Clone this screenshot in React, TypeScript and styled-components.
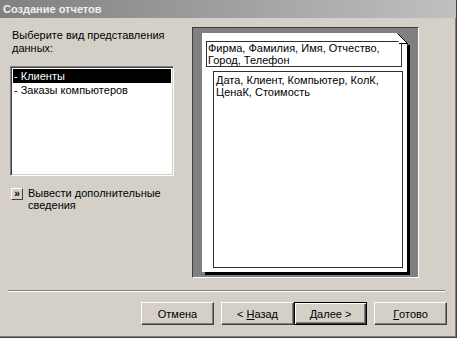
import React from 'react';
import styled, { createGlobalStyle } from 'styled-components';

const GlobalStyle = createGlobalStyle`
  html, body {
    margin: 0;
    padding: 0;
    background: #ffffff;
  }
  body {
    font-family: 'Liberation Sans', Arial, sans-serif;
    font-size: 11px;
    color: #000;
  }
  * {
    box-sizing: border-box;
  }
`;

const sourceItems = ['- Клиенты', '- Заказы компьютеров'];

const App: React.FC = () => {
  return (
    <>
      <GlobalStyle />
      <Window>
        <TitleBar>Создание отчетов</TitleBar>
        <Main>
          <LeftColumn>
            <Prompt>
              Выберите вид представления
              <br />
              данных:
            </Prompt>
            <ListBox>
              {sourceItems.map((item, i) => (
                <ListItem key={item} selected={i === 0}>
                  {item}
                </ListItem>
              ))}
            </ListBox>
            <MoreRow>
              <MoreButton>»</MoreButton>
              <MoreText>
                Вывести дополнительные
                <br />
                сведения
              </MoreText>
            </MoreRow>
          </LeftColumn>

          <PreviewFrame>
            <Paper>
              <FoldedCorner width="14" height="12" viewBox="0 0 14 12">
                <polygon points="0,0 14,0 14,12 11,12" fill="#808080" />
                <polygon points="0.5,0.5 10.5,10.5 2,10.5" fill="#ffffff" />
                <polyline points="0.5,0.5 10.5,10.5 2,10.5" fill="none" stroke="#000" strokeWidth="1" />
              </FoldedCorner>
              <HeaderBox>
                Фирма, Фамилия, Имя, Отчество,
                <br />
                Город, Телефон
              </HeaderBox>
              <DetailBox>
                Дата, Клиент, Компьютер, КолК,
                <br />
                ЦенаК, Стоимость
              </DetailBox>
            </Paper>
          </PreviewFrame>
        </Main>

        <Separator />

        <ButtonRow>
          <Button>Отмена</Button>
          <ButtonPair>
            <Button>
              {'< '}
              <u>Н</u>азад
            </Button>
            <Button isDefault>
              <u>Д</u>алее{' >'}
            </Button>
          </ButtonPair>
          <Button>
            <u>Г</u>отово
          </Button>
        </ButtonRow>
      </Window>
    </>
  );
};

const Window = styled.div`
  width: 457px;
  height: 338px;
  background: #d4d0c8;
  border-right: 1px solid #404040;
  border-bottom: 1px solid #404040;
  box-shadow: inset -1px -1px 0 #808080;
  display: flex;
  flex-direction: column;
`;

const TitleBar = styled.div`
  height: 18px;
  flex: none;
  padding: 0 3px;
  background: linear-gradient(90deg, #808080 0%, #a6a6a6 60%, #c0c0c0 100%);
  color: #f2f0ea;
  font-weight: bold;
  font-size: 11px;
  line-height: 18px;
`;

const Main = styled.div`
  height: 272px;
  flex: none;
  display: flex;
  align-items: flex-start;
  padding: 9px 0 0 10px;
`;

const LeftColumn = styled.div`
  width: 164px;
  flex: none;
  padding-top: 2px;
  display: flex;
  flex-direction: column;
`;

const Prompt = styled.div`
  line-height: 13px;
  padding-left: 2px;
`;

const ListBox = styled.div`
  margin-top: 11px;
  height: 110px;
  background: #ffffff;
  border-style: solid;
  border-width: 1px;
  border-color: #808080 #ffffff #ffffff #808080;
  box-shadow: inset 1px 1px 0 #404040, inset -1px -1px 0 #d4d0c8;
  padding: 2px 2px;
`;

const ListItem = styled.div<{ selected?: boolean }>`
  height: 14px;
  line-height: 14px;
  padding-left: 1px;
  background: ${props => (props.selected ? '#000000' : 'transparent')};
  color: ${props => (props.selected ? '#ffffff' : '#000000')};
`;

const MoreRow = styled.div`
  margin-top: 12px;
  display: flex;
  align-items: flex-start;
  gap: 5px;
  padding-left: 1px;
`;

const MoreButton = styled.div`
  width: 12px;
  height: 12px;
  flex: none;
  background: #d4d0c8;
  border-style: solid;
  border-width: 1px;
  border-color: #ffffff #404040 #404040 #ffffff;
  font-size: 10px;
  font-weight: bold;
  line-height: 9px;
  text-align: center;
`;

const MoreText = styled.div`
  line-height: 12px;
  margin-top: -1px;
`;

const PreviewFrame = styled.div`
  margin-left: 18px;
  width: 227px;
  height: 251px;
  flex: none;
  background: #808080;
  border-style: solid;
  border-width: 1px;
  border-color: #404040 #ffffff #ffffff #404040;
  padding: 5px 0 0 9px;
`;

const Paper = styled.div`
  position: relative;
  width: 205px;
  height: 239px;
  background: #ffffff;
  box-shadow: 3px 3px 0 #000000;
  display: flex;
  flex-direction: column;
  padding: 8px 4px 4px 4px;
`;

const FoldedCorner = styled.svg`
  position: absolute;
  top: 0;
  right: -4px;
  display: block;
`;

const HeaderBox = styled.div`
  height: 26px;
  margin-right: 1px;
  border: 1px solid #303030;
  padding: 0 0 0 1px;
  line-height: 12px;
`;

const DetailBox = styled.div`
  flex: 1;
  margin-top: 4px;
  margin-left: 7px;
  border: 1px solid #303030;
  padding: 2px 0 0 2px;
  line-height: 12px;
`;

const Separator = styled.div`
  margin: 0 0 0 8px;
  width: 437px;
  height: 2px;
  flex: none;
  border-top: 1px solid #808080;
  border-bottom: 1px solid #ffffff;
`;

const ButtonRow = styled.div`
  margin-top: 10px;
  display: flex;
  justify-content: flex-end;
  gap: 7px;
  padding-right: 9px;
`;

const ButtonPair = styled.div`
  display: flex;
`;

const Button = styled.div<{ isDefault?: boolean }>`
  width: 73px;
  height: 23px;
  display: flex;
  align-items: center;
  justify-content: center;
  white-space: pre;
  background: #d4d0c8;
  border-style: solid;
  border-width: 1px;
  border-color: ${props =>
    props.isDefault ? '#000000' : '#ffffff #404040 #404040 #ffffff'};
  box-shadow: ${props =>
    props.isDefault
      ? 'inset 1px 1px 0 #ffffff, inset -1px -1px 0 #404040, inset -2px -2px 0 #808080'
      : 'inset -1px -1px 0 #808080'};
  font-size: 11px;

  u {
    text-decoration: underline;
  }
`;

export default App;
